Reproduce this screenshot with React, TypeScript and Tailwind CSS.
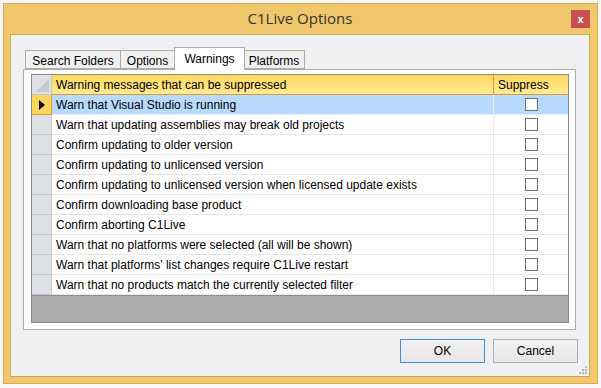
const warnings = [
  "Warn that Visual Studio is running",
  "Warn that updating assemblies may break old projects",
  "Confirm updating to older version",
  "Confirm updating to unlicensed version",
  "Confirm updating to unlicensed version when licensed update exists",
  "Confirm downloading base product",
  "Confirm aborting C1Live",
  "Warn that no platforms were selected (all will be shown)",
  "Warn that platforms' list changes require C1Live restart",
  "Warn that no products match the currently selected filter",
];

const tabs = [
  { label: "Search Folders", w: "w-[96px]" },
  { label: "Options", w: "w-[55px]" },
  { label: "Warnings", w: "w-[71px]" },
  { label: "Platforms", w: "w-[62px]" },
];

const Tab = ({ label, w, active }: { label: string; w: string; active?: boolean }) =>
  active ? (
    <div className={`relative z-10 -mb-px h-[23px] pt-[3px] text-center border border-b-0 border-[#acacac] bg-white -mx-px ${w}`}>
      {label}
    </div>
  ) : (
    <div className={`mt-[3px] h-[19px] pt-[2px] text-center border border-[#acacac] bg-[#f0f0f0] -ml-px first:ml-0 ${w}`}>
      {label}
    </div>
  );

const Checkbox = () => (
  <div className="w-[13px] h-[13px] border border-[#707070] bg-white" />
);

export default function App() {
  return (
    <div
      className="w-[601px] h-[388px] bg-[#f7f7f7] pt-[3px] pl-[3px] overflow-hidden text-[12px] text-black"
      style={{ fontFamily: '"Liberation Sans", Arial, sans-serif' }}
    >
      <div className="w-[595px] h-[381px] border border-[#d6ac52] bg-[#f0c86b] flex flex-col pl-[6px] pr-[7px] pb-[6px]">
        {/* title bar */}
        <div className="relative h-[30px] flex items-center justify-center">
          <span
            className="text-[15px] text-[#333333] -mt-[2px]"
            style={{ fontFamily: '"Open Sans", "Noto Sans", sans-serif' }}
          >
            C1Live Options
          </span>
          <div className="absolute right-0 top-[6px] w-[19px] h-[18px] bg-[#c75050] flex items-center justify-center text-white text-[11px] font-bold leading-none">
            x
          </div>
        </div>

        {/* client area */}
        <div className="flex-1 border border-[#c9a658] bg-[#f0f0f0] flex flex-col pl-[12px] pt-[12px] pr-[12px] relative">
          <div className="flex items-start ml-[2px] h-[22px] leading-[16px]">
            {tabs.map((t) => (
              <Tab key={t.label} label={t.label} w={t.w} active={t.label === "Warnings"} />
            ))}
          </div>

          <div className="w-[553px] h-[261px] border border-[#acacac] bg-white pl-[7px] pt-[4px]">
            <div className="w-[538px] h-[249px] border border-[#8a8a8a] flex flex-col bg-[#ababab]">
              {/* header */}
              <div className="flex h-[20px] shrink-0">
                <div className="relative w-[20px] bg-[#dde1e6] border-r border-b border-[#c4c8ce] overflow-hidden">
                  <svg className="absolute right-[2px] bottom-[2px]" width="13" height="13" viewBox="0 0 13 13">
                    <polygon points="13,0 13,13 0,13" fill="#c6cad0" />
                  </svg>
                </div>
                <div className="w-[442px] pl-[4px] flex items-center border-r border-b border-[#d69a3a] bg-gradient-to-b from-[#ffd65a] to-[#feea94]">
                  Warning messages that can be suppressed
                </div>
                <div className="w-[74px] pl-[4px] flex items-center border-b border-[#d69a3a] bg-gradient-to-b from-[#ffd65a] to-[#feea94]">
                  Suppress
                </div>
              </div>

              {/* rows */}
              {warnings.map((w, i) => {
                const sel = i === 0;
                return (
                  <div key={w} className="flex h-[20px] shrink-0">
                    <div
                      className={
                        sel
                          ? "w-[20px] bg-[#ffd65d] border-r border-b border-[#d69a3a] flex items-center justify-center"
                          : "w-[20px] bg-[#dde1e6] border-r border-b border-[#c4c8ce]"
                      }
                    >
                      {sel && (
                        <svg width="6" height="10" viewBox="0 0 6 10">
                          <polygon points="0,0 6,5 0,10" fill="#000" />
                        </svg>
                      )}
                    </div>
                    <div
                      className={`w-[442px] pl-[4px] flex items-center border-r border-b whitespace-nowrap ${
                        sel ? "bg-[#b7dafe] border-[#e8eef5]" : "bg-white border-[#e6e6e6]"
                      }`}
                    >
                      {w}
                    </div>
                    <div
                      className={`w-[74px] flex items-center justify-center border-b ${
                        sel ? "bg-[#b7dafe] border-[#e8eef5]" : "bg-white border-[#e6e6e6]"
                      }`}
                    >
                      <Checkbox />
                    </div>
                  </div>
                );
              })}
              <div className="h-px bg-[#8f8f8f] shrink-0" />
            </div>
          </div>

          {/* buttons */}
          <div className="flex justify-end gap-[8px] mt-[9px] -mr-[1px]">
            <button className="w-[85px] h-[24px] border border-[#3c8fe0] bg-gradient-to-b from-[#f2f2f2] to-[#e6e6e6]">
              OK
            </button>
            <button className="w-[85px] h-[24px] border border-[#adadad] bg-gradient-to-b from-[#f2f2f2] to-[#e6e6e6]">
              Cancel
            </button>
          </div>

          <svg className="absolute right-[2px] bottom-[2px]" width="8" height="8" viewBox="0 0 8 8">
            <rect x="6" y="0" width="2" height="2" fill="#b8b8b8" />
            <rect x="3" y="3" width="2" height="2" fill="#b8b8b8" />
            <rect x="6" y="3" width="2" height="2" fill="#b8b8b8" />
            <rect x="0" y="6" width="2" height="2" fill="#b8b8b8" />
            <rect x="3" y="6" width="2" height="2" fill="#b8b8b8" />
            <rect x="6" y="6" width="2" height="2" fill="#b8b8b8" />
          </svg>
        </div>
      </div>
    </div>
  );
}
